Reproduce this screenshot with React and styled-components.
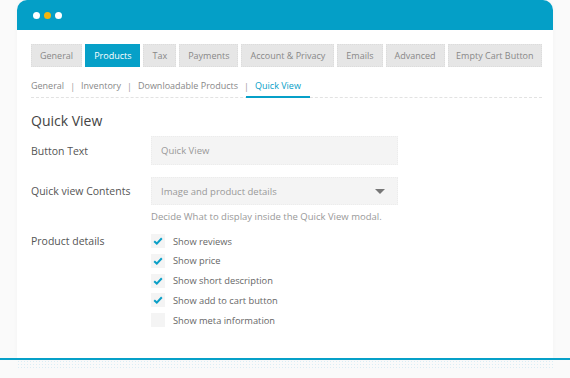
import styled, { createGlobalStyle } from "styled-components";

const GlobalStyle = createGlobalStyle`
  html, body {
    margin: 0;
    padding: 0;
    background: #fafafa;
  }
  body {
    font-family: "Open Sans", "Liberation Sans", sans-serif;
  }
`

const Page = styled.div`
  width: 570px;
  height: 378px;
  display: flex;
  flex-direction: column;
  overflow: hidden;
`

const Window = styled.div`
  margin: 0 17px;
  height: 358px;
  background: #fff;
  border-radius: 10px 10px 0 0;
  box-shadow: 0 0 5px rgba(0,0,0,0.035);
  display: flex;
  flex-direction: column;
`

const TitleBar = styled.div`
  height: 30px;
  background: #049fc7;
  border-radius: 10px 10px 0 0;
  display: flex;
  align-items: center;
  gap: 4px;
  padding-left: 16px;
`

const Dot = styled.span`
  width: 7px;
  height: 7px;
  border-radius: 50%;
  background: ${(p) => p.color};
`

const Body = styled.div`
  padding: 14px 11px 0 14px;
  display: flex;
  flex-direction: column;
`

const Tabs = styled.div`
  display: flex;
  gap: 3px;
`

const Tab = styled.div`
  height: 23px;
  padding: 0 8px;
  display: flex;
  align-items: center;
  justify-content: center;
  white-space: nowrap;
  font-size: 9px;
  background: ${(p) => (p.active ? "#06a0c8" : "#e6e6e6")};
  color: ${(p) => (p.active ? "#fff" : "#888")};
  border: 1px dotted ${(p) => (p.active ? "#06a0c8" : "#dcdcdc")};
  box-sizing: border-box;
  flex: ${(p) => (p.grow ? "1 1 0" : "none")};
  min-width: 0;
`

const SubTabs = styled.div`
  margin-top: 12px;
  display: flex;
  align-items: center;
  border-bottom: 1px dashed #e2e2e2;
  font-size: 9px;
  line-height: 14px;
`

const SubTab = styled.div`
  padding: 0 ${(p) => (p.active ? 9 : 0)}px 3px;
  margin-left: ${(p) => (p.active ? -9 : 0)}px;
  margin-bottom: -1px;
  color: ${(p) => (p.active ? "#06a0c8" : "#888")};
  border-bottom: 2px solid ${(p) => (p.active ? "#06a0c8" : "transparent")};
`

const Sep = styled.span`
  margin: 0 6px;
  padding-bottom: 3px;
  color: #999;
`

const Heading = styled.h2`
  margin: 14px 0 0;
  font-size: 14px;
  line-height: 17px;
  font-weight: 400;
  color: #444;
`

const Row = styled.div`
  display: grid;
  grid-template-columns: 120px 247px;
  align-items: ${(p) => (p.top ? "start" : "center")};
  margin-top: ${(p) => p.mt || 0}px;
`

const Label = styled.div`
  font-size: 10.5px;
  line-height: 14px;
  color: #555;
`

const Field = styled.div`
  height: ${(p) => p.h || 29}px;
  background: #f4f4f4;
  border: 1px dotted #ececec;
  box-sizing: border-box;
  display: flex;
  align-items: center;
  justify-content: space-between;
  padding: 0 12px 0 9px;
  font-size: 9.5px;
  color: #999;
`

const Caret = styled.span`
  width: 0;
  height: 0;
  border-left: 5px solid transparent;
  border-right: 5px solid transparent;
  border-top: 5px solid #777;
`

const Help = styled.div`
  grid-column: 2;
  font-size: 9.5px;
  line-height: 11px;
  color: #999;
  margin-top: 6px;
`

const Checks = styled.div`
  display: flex;
  flex-direction: column;
  gap: 5.75px;
`

const Check = styled.div`
  display: flex;
  align-items: center;
  gap: 8px;
  font-size: 9.3px;
  color: #666;
`

const Box = styled.span`
  width: 14px;
  height: 14px;
  background: #f4f4f4;
  display: flex;
  align-items: center;
  justify-content: center;
`

const BottomLine = styled.div`
  height: 2px;
  background: #07a0c8;
`

const Glow = styled.div`
  height: 10px;
  margin: 0 17px;
  background-image: radial-gradient(circle, #d6ecf4 0.7px, transparent 0.8px);
  background-size: 3px 3px;
  opacity: 0.9;
`

const tabs = ["General", "Products", "Tax", "Payments", "Account & Privacy", "Emails", "Advanced", "Empty Cart Button"];
const checks = [
  ["Show reviews", true],
  ["Show price", true],
  ["Show short description", true],
  ["Show add to cart button", true],
  ["Show meta information", false],
];

function Tick() {
  return (
    <svg width="10" height="8" viewBox="0 0 10 8">
      <path d="M1.2 4.2 L3.8 6.6 L8.8 1.2" fill="none" stroke="#0a9fc7" strokeWidth="2" />
    </svg>
  );
}

export default function App() {
  return (
    <Page>
      <GlobalStyle />
      <Window>
        <TitleBar>
          <Dot color="#fff" />
          <Dot color="#f5b50e" />
          <Dot color="#fff" />
        </TitleBar>
        <Body>
          <Tabs>
            {tabs.map((t, i) => (
              <Tab key={t} active={t === "Products"} grow={i === tabs.length - 1}>{t}</Tab>
            ))}
          </Tabs>
          <SubTabs>
            <SubTab>General</SubTab>
            <Sep>|</Sep>
            <SubTab>Inventory</SubTab>
            <Sep>|</Sep>
            <SubTab>Downloadable Products</SubTab>
            <Sep>|</Sep>
            <SubTab active>Quick View</SubTab>
          </SubTabs>
          <Heading>Quick View</Heading>
          <Row mt={7}>
            <Label>Button Text</Label>
            <Field>Quick View</Field>
          </Row>
          <Row mt={12}>
            <Label>Quick view Contents</Label>
            <Field h={28}>
              Image and product details
              <Caret />
            </Field>
            <Help>Decide What to display inside the Quick View modal.</Help>
          </Row>
          <Row mt={12} top>
            <Label>Product details</Label>
            <Checks>
              {checks.map(([t, on]) => (
                <Check key={t}>
                  <Box>{on && <Tick />}</Box>
                  {t}
                </Check>
              ))}
            </Checks>
          </Row>
        </Body>
      </Window>
      <BottomLine />
      <Glow />
    </Page>
  );
}
